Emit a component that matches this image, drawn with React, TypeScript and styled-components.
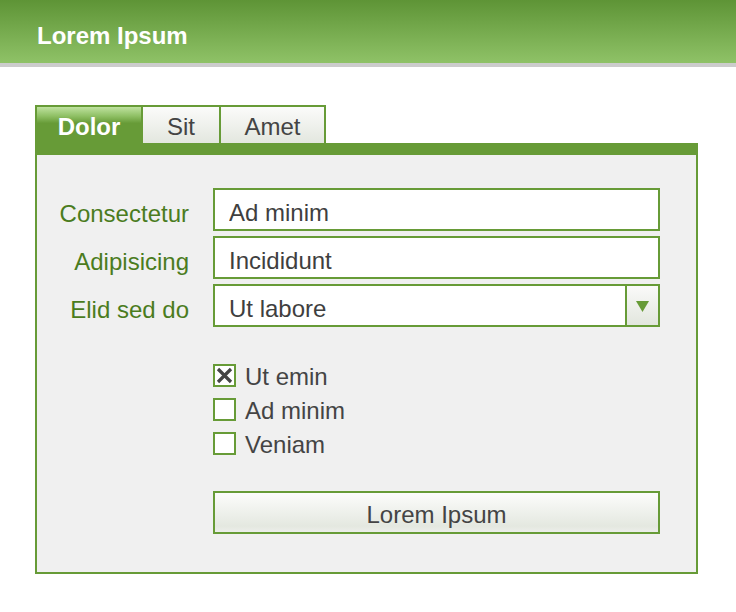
import React from "react";
import styled, { createGlobalStyle } from "styled-components";

const GREEN = "#679b37";

const GlobalStyle = createGlobalStyle`
  html, body {
    margin: 0;
    padding: 0;
    background: #ffffff;
    font-family: "Liberation Sans", Arial, Helvetica, sans-serif;
  }
  * { box-sizing: border-box; }
`;

const Header = styled.header`
  height: 67px;
  padding: 9px 0 0 37px;
  background: linear-gradient(#5e9436, #8fc267);
  border-bottom: 4px solid #cccccc;
  display: flex;
  align-items: center;
`;

const Title = styled.h1`
  margin: 0;
  font-size: 24px;
  font-weight: bold;
  color: #ffffff;
  line-height: 28px;
`;

const Main = styled.main`
  padding: 38px 0 0 35px;
`;

const Panel = styled.section`
  width: 663px;
`;

const TabBar = styled.div`
  display: flex;
  height: 38px;
`;

const Tab = styled.button<{ $active?: boolean; $w: number; $last?: boolean }>`
  width: ${(p) => p.$w}px;
  height: 38px;
  margin: 0;
  padding: 4px 0 0;
  border: 2px solid ${GREEN};
  border-bottom: none;
  border-right: ${(p) => (p.$last ? `2px solid ${GREEN}` : "none")};
  font-family: inherit;
  font-size: 24px;
  line-height: 32px;
  font-weight: ${(p) => (p.$active ? "bold" : "normal")};
  color: ${(p) => (p.$active ? "#ffffff" : "#444444")};
  background: ${(p) =>
    p.$active
      ? `linear-gradient(#bfe29f 0%, #8fc065 25%, ${GREEN} 45%, ${GREEN} 100%)`
      : "linear-gradient(#fbfbfa, #e3e7df)"};
  cursor: pointer;
`;

const Body = styled.div`
  border: 2px solid ${GREEN};
  border-top-width: 12px;
  background: #f0f0f0;
  padding: 33px 36px 38px 0;
`;

const FormGrid = styled.div`
  display: grid;
  grid-template-columns: 152px 1fr;
  column-gap: 24px;
  row-gap: 5px;
`;

const Label = styled.label`
  text-align: right;
  font-size: 24px;
  line-height: 35px;
  padding-top: 8px;
  color: #4b7c1e;
  white-space: nowrap;
`;

const TextField = styled.input`
  height: 43px;
  width: 100%;
  border: 2px solid ${GREEN};
  background: #ffffff;
  padding: 6px 0 0 14px;
  margin: 0;
  font-family: inherit;
  font-size: 24px;
  color: #3f3f3f;
  outline: none;
`;

const SelectBox = styled.div`
  height: 43px;
  display: flex;
  border: 2px solid ${GREEN};
  background: #ffffff;
`;

const SelectValue = styled.div`
  flex: 1;
  padding: 6px 0 0 14px;
  font-size: 24px;
  line-height: 33px;
  color: #3f3f3f;
`;

const SelectArrow = styled.div`
  width: 33px;
  border-left: 2px solid ${GREEN};
  background: linear-gradient(#fafaf9, #e2e6de);
  display: flex;
  align-items: center;
  justify-content: center;
  padding-top: 2px;
`;

const Indent = styled.div`
  margin-left: 176px;
`;

const CheckList = styled(Indent)`
  margin-top: 37px;
  display: flex;
  flex-direction: column;
  gap: 11px;
`;

const CheckRow = styled.label`
  display: flex;
  align-items: center;
  gap: 9px;
  height: 23px;
  font-size: 24px;
  color: #444444;
  cursor: pointer;
`;

const Box = styled.span`
  width: 23px;
  height: 23px;
  border: 2px solid ${GREEN};
  background: #ffffff;
  display: flex;
  align-items: center;
  justify-content: center;
  flex-shrink: 0;
`;

const CheckText = styled.span`
  line-height: 23px;
  padding-top: 2px;
`;

const ActionButton = styled.button`
  display: block;
  margin: 36px 0 0 176px;
  width: 447px;
  height: 43px;
  border: 2px solid ${GREEN};
  background: linear-gradient(#fcfcfb 0%, #e4e8e0 85%, #eceeea 100%);
  font-family: inherit;
  font-size: 24px;
  color: #444444;
  padding: 5px 0 0;
  cursor: pointer;
`;

const checks = [
  { label: "Ut emin", checked: true },
  { label: "Ad minim", checked: false },
  { label: "Veniam", checked: false },
];

export default function App() {
  return (
    <>
      <GlobalStyle />
      <Header>
        <Title>Lorem Ipsum</Title>
      </Header>
      <Main>
        <Panel>
          <TabBar>
            <Tab $active $w={106}>Dolor</Tab>
            <Tab $w={78}>Sit</Tab>
            <Tab $w={107} $last>Amet</Tab>
          </TabBar>
          <Body>
            <FormGrid>
              <Label>Consectetur</Label>
              <TextField readOnly defaultValue="Ad minim" />
              <Label>Adipisicing</Label>
              <TextField readOnly defaultValue="Incididunt" />
              <Label>Elid sed do</Label>
              <SelectBox>
                <SelectValue>Ut labore</SelectValue>
                <SelectArrow>
                  <svg width="13" height="11" viewBox="0 0 13 11">
                    <polygon points="0,0 13,0 6.5,11" fill={GREEN} />
                  </svg>
                </SelectArrow>
              </SelectBox>
            </FormGrid>
            <CheckList>
              {checks.map((c) => (
                <CheckRow key={c.label}>
                  <Box>
                    {c.checked && (
                      <svg width="17" height="17" viewBox="0 0 17 17">
                        <path d="M2 2 L15 15 M15 2 L2 15" stroke="#444" strokeWidth="3.2" />
                      </svg>
                    )}
                  </Box>
                  <CheckText>{c.label}</CheckText>
                </CheckRow>
              ))}
            </CheckList>
            <ActionButton>Lorem Ipsum</ActionButton>
          </Body>
        </Panel>
      </Main>
    </>
  );
}
